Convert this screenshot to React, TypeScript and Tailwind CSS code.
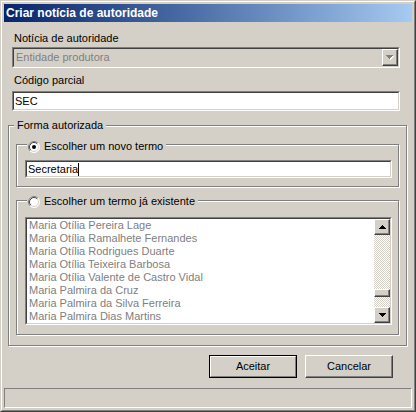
const names = [
  "Maria Otília Pereira Lage",
  "Maria Otília Ramalhete Fernandes",
  "Maria Otília Rodrigues Duarte",
  "Maria Otília Teixeira Barbosa",
  "Maria Otília Valente de Castro Vidal",
  "Maria Palmira da Cruz",
  "Maria Palmira da Silva Ferreira",
  "Maria Palmira Dias Martins",
]

const sunkenOuter = "border border-t-[#808080] border-l-[#808080] border-r-white border-b-white"
const sunkenInner = "border border-t-[#404040] border-l-[#404040] border-r-[#d4d0c8] border-b-[#d4d0c8]"
const raised =
  "bg-[#d4d0c8] border border-t-white border-l-white border-r-[#404040] border-b-[#404040] shadow-[inset_-1px_-1px_0_#808080]"
const etched = "border border-[#808080] shadow-[inset_1px_1px_0_#ffffff,1px_1px_0_#ffffff]"

function Radio({ checked }: { checked?: boolean }) {
  return (
    <svg width="12" height="12" viewBox="0 0 12 12" className="shrink-0">
      <circle cx="6" cy="6" r="5.5" fill="#ffffff" />
      <path d="M2.1 9.9 A5.5 5.5 0 0 1 9.9 2.1" fill="none" stroke="#808080" strokeWidth="1" />
      <path d="M9.9 2.1 A5.5 5.5 0 0 1 2.1 9.9" fill="none" stroke="#ffffff" strokeWidth="1" />
      <path d="M2.8 9.2 A4.5 4.5 0 0 1 9.2 2.8" fill="none" stroke="#404040" strokeWidth="1" />
      <path d="M9.2 2.8 A4.5 4.5 0 0 1 2.8 9.2" fill="none" stroke="#d4d0c8" strokeWidth="1" />
      {checked && <circle cx="6" cy="6" r="2" fill="#000000" />}
    </svg>
  )
}

function UpArrow({ color = "#000" }: { color?: string }) {
  return (
    <svg width="7" height="4" viewBox="0 0 7 4">
      <path d="M3 0h1v1h1v1h1v1h1v1H0V3h1V2h1V1h1z" fill={color} />
    </svg>
  )
}

function DownArrow({ color = "#000" }: { color?: string }) {
  return (
    <svg width="7" height="4" viewBox="0 0 7 4">
      <path d="M0 0h7v1h-1v1h-1v1h-1v1h-1V3H2V2H1V1H0z" fill={color} />
    </svg>
  )
}

export default function App() {
  return (
    <div className="w-[416px] h-[412px] bg-[#d4d0c8] border border-t-[#d4d0c8] border-l-[#d4d0c8] border-r-[#404040] border-b-[#404040] font-['Liberation_Sans',Arial,sans-serif] text-[11px] leading-[13px] text-black">
      <div className="h-full border border-t-white border-l-white border-r-[#808080] border-b-[#808080] p-[2px] flex flex-col">
        {/* title bar */}
        <div className="h-[18px] shrink-0 bg-linear-to-r from-[#0a246a] to-[#a6caf0] flex items-center pl-[2px] text-[12px] text-white font-bold">
          Criar notícia de autoridade
        </div>

        <div className="pl-[8px] flex flex-col">
          <div className="mt-[10px] pl-[2px] h-[13px]">Notícia de autoridade</div>
          <div className={"mt-[2px] w-[388px] h-[21px] " + sunkenOuter}>
            <div className={"h-full flex " + sunkenInner}>
              <div className="flex-1 flex items-center pl-[2px] text-[#808080]">Entidade produtora</div>
              <div className={"w-[16px] flex items-center justify-center " + raised}>
                <div className="relative w-[8px] h-[5px]">
                  <div className="absolute left-[1px] top-[1px] flex">
                    <DownArrow color="#ffffff" />
                  </div>
                  <div className="absolute left-0 top-0 flex">
                    <DownArrow color="#808080" />
                  </div>
                </div>
              </div>
            </div>
          </div>

          <div className="mt-[6px] pl-[2px] h-[13px]">Código parcial</div>
          <div className={"mt-[4px] w-[388px] h-[20px] bg-white " + sunkenOuter}>
            <div className={"h-full flex items-center pl-[1px] " + sunkenInner}>SEC</div>
          </div>
        </div>

        {/* Forma autorizada */}
        <div className={"mt-[14px] ml-[4px] w-[399px] flex flex-col pb-[10px] " + etched}>
          <div className="-mt-[7px] ml-[5px] self-start px-[3px] h-[13px] bg-[#d4d0c8]">Forma autorizada</div>

          <div className={"mt-[12px] ml-[7px] w-[383px] flex flex-col pb-[8px] " + etched}>
            <div className="-mt-[5px] ml-[10px] self-start flex items-center gap-[4px] pl-[1px] pr-[3px] h-[13px] bg-[#d4d0c8]">
              <Radio checked />
              <span>Escolher um novo termo</span>
            </div>
            <div className={"mt-[7px] ml-[8px] w-[367px] h-[18px] bg-white " + sunkenOuter}>
              <div className={"h-full flex items-center pl-[1px] " + sunkenInner}>
                <span>Secretaria</span>
                <span className="w-px h-[13px] bg-black" />
              </div>
            </div>
          </div>

          <div className={"mt-[13px] ml-[7px] w-[383px] flex flex-col pb-[9px] " + etched}>
            <div className="-mt-[6px] ml-[10px] self-start flex items-center gap-[4px] pl-[1px] pr-[3px] h-[13px] bg-[#d4d0c8]">
              <Radio />
              <span>Escolher um termo já existente</span>
            </div>
            <div className={"mt-[9px] ml-[8px] w-[367px] h-[108px] " + sunkenOuter}>
              <div className={"h-full flex " + sunkenInner}>
                <div className="flex-1 bg-white pl-[2px] text-[#808080]">
                  {names.map(n => (
                    <div key={n} className="h-[13px] whitespace-nowrap">{n}</div>
                  ))}
                </div>
                <div className="w-[16px] flex flex-col bg-[repeating-conic-gradient(#d4d0c8_0%_25%,#ffffff_0%_50%)] bg-[length:2px_2px]">
                  <div className={"h-[16px] flex items-center justify-center " + raised}>
                    <UpArrow />
                  </div>
                  <div className="h-[54px]" />
                  <div className={"h-[8px] " + raised} />
                  <div className="flex-1" />
                  <div className={"h-[16px] flex items-center justify-center " + raised}>
                    <DownArrow />
                  </div>
                </div>
              </div>
            </div>
          </div>
        </div>

        {/* buttons */}
        <div className="mt-[9px] flex justify-end gap-[8px] pr-[19px]">
          <div className="w-[88px] h-[23px] border border-black">
            <div className="h-full flex items-center justify-center border border-t-white border-l-white border-r-[#808080] border-b-[#808080]">
              Aceitar
            </div>
          </div>
          <div className={"w-[88px] h-[23px] flex items-center justify-center " + raised}>Cancelar</div>
        </div>

        {/* status bar */}
        <div className="mt-[10px] h-[20px] border border-t-[#808080] border-l-[#808080] border-r-white border-b-white" />
      </div>
    </div>
  )
}
